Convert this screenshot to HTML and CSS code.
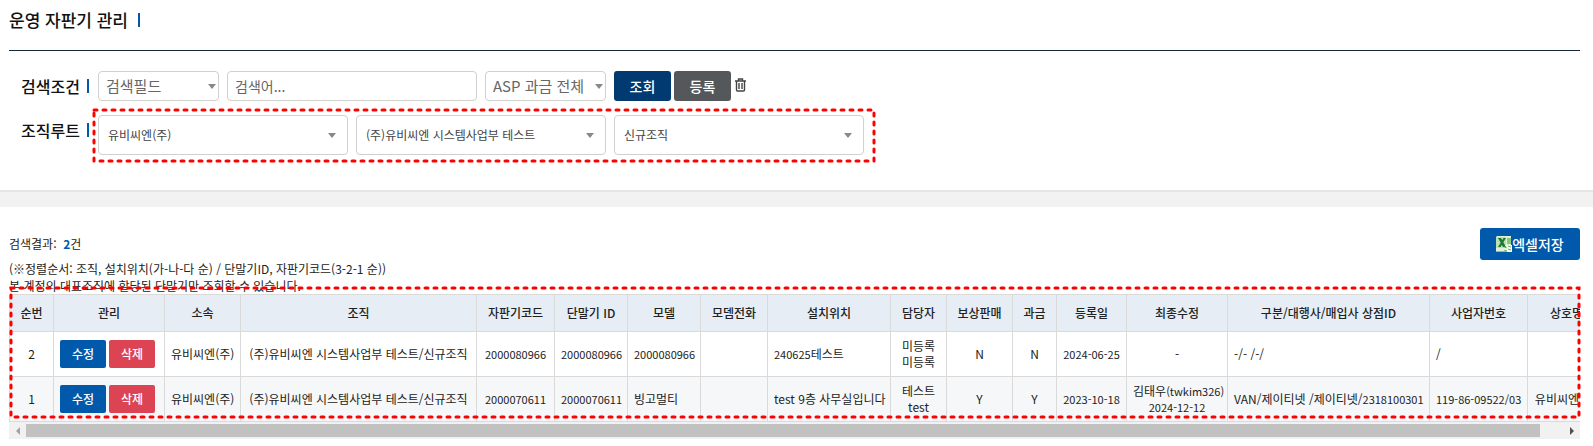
FILE: index.html
```html
<!DOCTYPE html>
<html lang="ko">
<head>
<meta charset="utf-8">
<title>운영 자판기 관리</title>
<link rel="stylesheet" href="styles.css">
</head>
<body>
<header class="page-head">
  <h1 class="title">운영 자판기 관리</h1>
</header>

<form class="search">
  <div class="row">
    <label class="label" for="field">검색조건</label>
    <span class="select narrow"><select id="field"><option>검색필드</option></select></span>
    <input class="keyword" type="text" placeholder="검색어..." aria-label="검색어">
    <span class="select narrow"><select aria-label="ASP 과금"><option>ASP 과금 전체</option></select></span>
    <div class="actions">
      <button class="btn navy" type="button">조회</button>
      <button class="btn gray" type="button">등록</button>
      <button class="trash" type="button" aria-label="초기화">
        <svg width="11" height="14" viewBox="0 0 11 14" fill="none" stroke="#444" stroke-width="1.4">
          <path d="M0 3h11M3.5 3V1h4v2M1.5 3v9q0 1 1 1h6q1 0 1-1V3M4 5v6M7 5v6"/>
        </svg>
      </button>
    </div>
  </div>
  <div class="row">
    <label class="label" for="root">조직루트</label>
    <div class="roots">
      <span class="select wide"><select id="root"><option>유비씨엔(주)</option></select></span>
      <span class="select wide"><select aria-label="하위 조직"><option>(주)유비씨엔 시스템사업부 테스트</option></select></span>
      <span class="select wide"><select aria-label="세부 조직"><option>신규조직</option></select></span>
      <svg class="mark mark-roots"><rect width="100%" height="100%"/></svg>
    </div>
  </div>
</form>

<main class="results">
  <div class="summary">
    <p class="count">검색결과:&nbsp; <strong>2</strong>건</p>
    <button class="btn excel" type="button">
      <svg width="16" height="16" viewBox="0 0 16 16">
        <path d="M1 0h14v9l1 7H0V1z" fill="#dff0d8"/>
        <path d="M0 1h10v11H0z" fill="#bfe0b0"/>
        <path d="M8 9h8v7H8z" fill="#f4faf0"/>
        <path d="M11 2h4v6h-4zM0 15h11v1H0z" fill="#8cc578"/>
        <path d="M2 2h3l5 9H7zM7.500 2H10L4.500 11H2z" fill="#1d7a34"/>
        <path d="M8 11l3 1M12 10l3 1M8 14l3 1M12 13l3 1" stroke="#6fb45c"/>
      </svg><span>엑셀저장</span>
    </button>
  </div>
  <p class="note">(※정렬순서: 조직, 설치위치(가-나-다 순) / 단말기ID, 자판기코드(3-2-1 순))<br>본 계정의 대표조직에 할당된 단말기만 조회할 수 있습니다.</p>

  <div class="grid">
    <div class="viewport">
      <table>
        <colgroup>
          <col class="c44"><col class="c111"><col class="c76"><col class="c236"><col class="c78"><col class="c73"><col class="c73"><col class="c67"><col class="c123"><col class="c56"><col class="c66"><col class="c44"><col class="c70"><col class="c101"><col class="c202"><col class="c98"><col class="c78">
        </colgroup>
        <thead>
          <tr><th>순번</th><th>관리</th><th>소속</th><th>조직</th><th>자판기코드</th><th>단말기 ID</th><th>모델</th><th>모뎀전화</th><th>설치위치</th><th>담당자</th><th>보상판매</th><th>과금</th><th>등록일</th><th>최종수정</th><th>구분/대행사/매입사 상점ID</th><th>사업자번호</th><th>상호명</th></tr>
        </thead>
        <tbody>
          <tr>
            <td>2</td>
            <td><div class="ops"><button class="mini edit" type="button">수정</button><button class="mini del" type="button">삭제</button></div></td>
            <td>유비씨엔(주)</td><td>(주)유비씨엔 시스템사업부 테스트/신규조직</td>
            <td class="num">2000080966</td><td class="num">2000080966</td><td class="num left">2000080966</td><td></td>
            <td class="left"><span class="num">240625</span>테스트</td><td>미등록<br>미등록</td><td>N</td><td>N</td>
            <td class="num">2024-06-25</td><td>-</td><td class="left">-/- /-/</td><td class="left">/</td><td></td>
          </tr>
          <tr>
            <td>1</td>
            <td><div class="ops"><button class="mini edit" type="button">수정</button><button class="mini del" type="button">삭제</button></div></td>
            <td>유비씨엔(주)</td><td>(주)유비씨엔 시스템사업부 테스트/신규조직</td>
            <td class="num">2000070611</td><td class="num">2000070611</td><td class="left">빙고멀티</td><td></td>
            <td class="left">test 9층 사무실입니다</td><td>테스트<br>test</td><td>Y</td><td>Y</td>
            <td class="num">2023-10-18</td><td>김태우<span class="num">(twkim326)<br>2024-12-12</span></td><td class="left">VAN/제이티넷 /제이티넷/<span class="num">2318100301</span></td><td class="num left">119-86-09522/03</td><td>유비씨엔(주)</td>
          </tr>
        </tbody>
      </table>
    </div>
    <div class="scroll">
      <i class="arrow prev"></i><div class="track"><div class="thumb"></div></div><i class="arrow next"></i>
    </div>
    <svg class="mark mark-grid"><rect width="100%" height="100%"/></svg>
  </div>
</main>
</body>
</html>
```
FILE: styles.css
```css
* { box-sizing: border-box; }
body {
  margin: 0;
  background: #fff;
  color: #222;
  font: 12px/16px "Noto Sans CJK KR", "Noto Sans", sans-serif;
}
button, input, select { font: inherit; }
button { border: 0; padding: 0; cursor: pointer; }
p { margin: 0; }

.page-head {
  margin: 0 13px 0 9px;
  height: 51px;
  border-bottom: 1px solid #16283c;
}
.title {
  display: flex;
  align-items: center;
  gap: 10px;
  margin: 0;
  height: 40px;
  color: #111;
  font-size: 17px;
  font-weight: 500;
}
.title::after, .label::after {
  content: "";
  width: 2px;
  height: 14px;
  background: #0059ab;
}

.search {
  display: flex;
  flex-direction: column;
  gap: 14px;
  padding: 20px 21px 35px;
  border-bottom: 2px solid #e5e5e5;
}
.row { display: flex; gap: 8px; }
.label {
  display: flex;
  align-items: center;
  justify-content: space-between;
  width: 69px;
  height: 30px;
  padding-right: 1px;
  color: #111;
  font-size: 16px;
  font-weight: 500;
}
.select { position: relative; display: flex; }
.select select {
  width: 100%;
  margin: 0;
  border: 1px solid #d0d0d0;
  border-radius: 4px;
  background: #fff;
  appearance: none;
}
.select::after {
  content: "";
  position: absolute;
  top: 50%;
  right: 3px;
  margin-top: -2px;
  border: 4px solid transparent;
  border-top: 5px solid #888;
  border-bottom: 0;
  pointer-events: none;
}
.narrow { width: 121px; height: 30px; }
.narrow select { padding: 0 7px; color: #666; font-size: 15px; }
.wide { width: 250px; height: 40px; }
.wide select { padding: 0 9px; color: #444; }
.wide::after { right: 12px; }
.keyword {
  width: 250px;
  height: 30px;
  padding: 0 7px;
  border: 1px solid #d0d0d0;
  border-radius: 4px;
}
.keyword, .keyword::placeholder { color: #666; font-size: 14px; opacity: 1; }
.actions { display: flex; gap: 3px; }
.btn {
  width: 57px;
  border-radius: 3px;
  color: #fff;
  font-size: 14px;
  font-weight: 500;
}
.navy { background: #003a70; }
.gray { background: #55585b; }
.trash { display: flex; align-items: flex-start; margin-left: 1px; padding-top: 7px; background: none; }
.roots { position: relative; display: flex; gap: 8px; }

.mark { position: absolute; overflow: visible; pointer-events: none; }
.mark rect {
  fill: none;
  stroke: #f00;
  stroke-width: 3;
  stroke-dasharray: 3 6;
  stroke-linecap: round;
}
.mark-roots { left: -4px; top: -5px; width: calc(100% + 14px); height: 51px; }
.mark-grid { left: 2px; top: -6px; width: calc(100% - 3px); height: 129px; }

.results {
  padding: 21px 13px 0 9px;
  border-top: 15px solid #f2f2f2;
}
.summary { display: flex; justify-content: space-between; align-items: center; height: 32px; }
.count strong { color: #0059ab; }
.excel {
  display: flex;
  align-items: center;
  justify-content: center;
  width: 100px;
  height: 32px;
  background: #0059ab;
}
.note { line-height: 17px; white-space: nowrap; }

.grid { position: relative; }
.viewport { overflow: hidden; }
table { width: 1596px; table-layout: fixed; border-collapse: collapse; }
th, td {
  height: 45px;
  padding: 0 6px;
  border: 1px solid #dadada;
  text-align: center;
  white-space: nowrap;
}
th { height: 37px; background: #e6edf5; font-weight: 500; }
tbody tr:nth-child(even) { background: #f5f7f9; }
.left { text-align: left; }
.num { font-size: 11px; }
.c44 { width: 44px; }
.c56 { width: 56px; }
.c66 { width: 66px; }
.c67 { width: 67px; }
.c70 { width: 70px; }
.c73 { width: 73px; }
.c76 { width: 76px; }
.c78 { width: 78px; }
.c98 { width: 98px; }
.c101 { width: 101px; }
.c111 { width: 111px; }
.c123 { width: 123px; }
.c202 { width: 202px; }
.c236 { width: 236px; }
.ops { display: flex; gap: 3px; }
.mini {
  width: 46px;
  height: 28px;
  border-radius: 2px;
  color: #fff;
  font-weight: 500;
}
.edit { background: #0059ab; }
.del { background: #dc4453; }

.scroll { display: flex; align-items: center; height: 17px; background: #f1f1f1; }
.track { flex: 1; }
.thumb { width: 98.5%; height: 13px; background: #c1c1c1; }
.arrow { flex: none; width: 17px; display: flex; justify-content: center; }
.arrow::before { content: ""; border: 4px solid transparent; }
.prev::before { border-right-color: #a3a3a3; border-left: 0; }
.next::before { border-left-color: #505050; border-right: 0; }
```
